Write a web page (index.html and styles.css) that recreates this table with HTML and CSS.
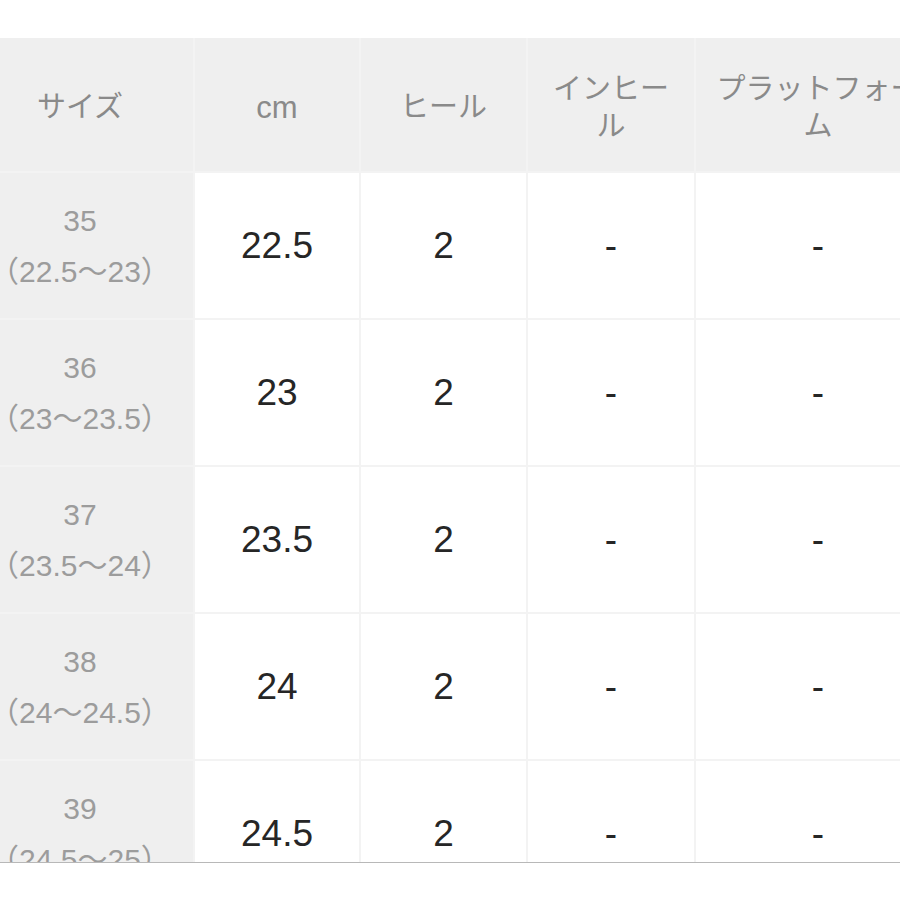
FILE: index.html
```html
<!DOCTYPE html>
<html lang="ja">
<head>
<meta charset="utf-8">
<link rel="stylesheet" href="styles.css">
</head>
<body>
<div class="viewport">
  <div class="chart">
    <div class="cell head first">サイズ</div>
    <div class="cell head latin">cm</div>
    <div class="cell head">ヒール</div>
    <div class="cell head">インヒール</div>
    <div class="cell head">プラットフォーム</div>

    <div class="cell size first"><span>35</span><span>（22.5〜23）</span></div>
    <div class="cell val">22.5</div>
    <div class="cell val">2</div>
    <div class="cell val">-</div>
    <div class="cell val">-</div>

    <div class="cell size first"><span>36</span><span>（23〜23.5）</span></div>
    <div class="cell val">23</div>
    <div class="cell val">2</div>
    <div class="cell val">-</div>
    <div class="cell val">-</div>

    <div class="cell size first"><span>37</span><span>（23.5〜24）</span></div>
    <div class="cell val">23.5</div>
    <div class="cell val">2</div>
    <div class="cell val">-</div>
    <div class="cell val">-</div>

    <div class="cell size first"><span>38</span><span>（24〜24.5）</span></div>
    <div class="cell val">24</div>
    <div class="cell val">2</div>
    <div class="cell val">-</div>
    <div class="cell val">-</div>

    <div class="cell size first"><span>39</span><span>（24.5〜25）</span></div>
    <div class="cell val">24.5</div>
    <div class="cell val">2</div>
    <div class="cell val">-</div>
    <div class="cell val">-</div>
  </div>
</div>
</body>
</html>
```

FILE: styles.css
```css
html, body {
  margin: 0;
  padding: 0;
  background: #ffffff;
}
body {
  font-family: "Liberation Sans", "Noto Sans CJK JP", sans-serif;
  padding-top: 38px;
}
.viewport {
  width: 900px;
  height: 824px;
  overflow: hidden;
  border-bottom: 1px solid #b8b8b8;
}
.chart {
  display: grid;
  grid-template-columns: 193px 164px 165px 166px 244px;
  grid-template-rows: 133px repeat(5, 145px);
  gap: 2px;
  background: #f3f3f3;
  width: max-content;
}
.cell {
  display: flex;
  align-items: center;
  justify-content: center;
  text-align: center;
  box-sizing: border-box;
}
.head {
  background: #efefef;
  color: #8a8a8a;
  font-size: 29px;
  line-height: 37px;
  padding: 6px 14px 0;
}
.head.first {
  padding: 6px 33px 0 0;
}
.head.latin {
  font-size: 31px;
}
.size {
  background: #efefef;
  color: #9c9c9c;
  font-size: 30px;
  line-height: 51px;
  flex-direction: column;
  white-space: nowrap;
  font-feature-settings: "halt";
}
.size.first {
  padding-right: 33px;
}
.val {
  background: #ffffff;
  color: #262626;
  font-size: 37px;
}
```
